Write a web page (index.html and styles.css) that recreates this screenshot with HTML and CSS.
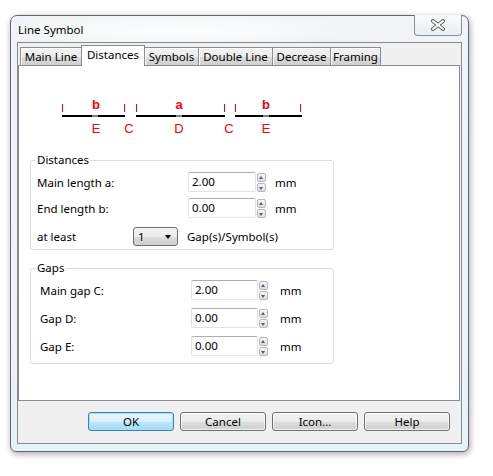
FILE: index.html
```html
<html lang="en">

<head>
  <meta charset="UTF-8">
  <meta name="viewport" content="width=device-width, initial-scale=1.0">
  <title>Line Symbol</title>
  <link rel="stylesheet" href="styles.css">
</head>

<body>
  <div class="window">
    <div class="titlebar">
      <span class="title">Line Symbol</span>
      <button type="button" class="close-btn">
        <svg width="16" height="12" viewBox="0 0 16 12">
          <path d="M3 2 L13 10 M13 2 L3 10" stroke="#5d6369" stroke-width="4" stroke-linecap="round" />
          <path d="M3 2 L13 10 M13 2 L3 10" stroke="#fff" stroke-width="2" stroke-linecap="round" />
        </svg>
      </button>
    </div>
    <div class="client">
      <div class="tabs">
        <div class="tab">Main Line</div>
        <div class="tab active">Distances</div>
        <div class="tab">Symbols</div>
        <div class="tab">Double Line</div>
        <div class="tab">Decrease</div>
        <div class="tab">Framing</div>
      </div>
      <div class="tab-page">
        <!-- legend sketch: end parts b, main part a, gaps C / D / E -->
        <svg class="diagram" width="300" height="86" viewBox="0 0 300 86">
          <g stroke="#000" stroke-width="2">
            <line x1="43" y1="50" x2="106" y2="50" />
            <line x1="117" y1="50" x2="206" y2="50" />
            <line x1="216" y1="50" x2="283" y2="50" />
          </g>
          <g stroke="#808080" stroke-width="2">
            <line x1="73" y1="50" x2="79" y2="50" />
            <line x1="157" y1="50" x2="163" y2="50" />
            <line x1="244" y1="50" x2="250" y2="50" />
          </g>
          <g stroke="#f00" stroke-width="1">
            <line x1="43.5" y1="38" x2="43.5" y2="46" />
            <line x1="105.5" y1="38" x2="105.5" y2="46" />
            <line x1="117.5" y1="38" x2="117.5" y2="46" />
            <line x1="205.5" y1="38" x2="205.5" y2="46" />
            <line x1="216.5" y1="38" x2="216.5" y2="46" />
            <line x1="281.5" y1="38" x2="281.5" y2="46" />
          </g>
          <text class="mark-small" x="77" y="43">b</text>
          <text class="mark-small" x="160" y="43">a</text>
          <text class="mark-small" x="247" y="43">b</text>
          <text class="mark-cap" x="77" y="67">E</text>
          <text class="mark-cap" x="110" y="67">C</text>
          <text class="mark-cap" x="160" y="67">D</text>
          <text class="mark-cap" x="210" y="67">C</text>
          <text class="mark-cap" x="247" y="67">E</text>
        </svg>

        <fieldset class="group group-distances">
          <legend>Distances</legend>
          <div class="field-row">
            <span class="label">Main length a:</span>
            <span class="textbox">2.00</span>
            <span class="spinner"><span class="spin up"></span><span class="spin down"></span></span>
            <span class="unit">mm</span>
          </div>
          <div class="field-row">
            <span class="label">End length b:</span>
            <span class="textbox">0.00</span>
            <span class="spinner"><span class="spin up"></span><span class="spin down"></span></span>
            <span class="unit">mm</span>
          </div>
          <div class="field-row combo-row">
            <span class="label short">at least</span>
            <span class="combo">1</span>
            <span class="unit">Gap(s)/Symbol(s)</span>
          </div>
        </fieldset>

        <fieldset class="group group-gaps">
          <legend>Gaps</legend>
          <div class="field-row">
            <span class="label">Main gap C:</span>
            <span class="textbox">2.00</span>
            <span class="spinner"><span class="spin up"></span><span class="spin down"></span></span>
            <span class="unit">mm</span>
          </div>
          <div class="field-row">
            <span class="label">Gap D:</span>
            <span class="textbox">0.00</span>
            <span class="spinner"><span class="spin up"></span><span class="spin down"></span></span>
            <span class="unit">mm</span>
          </div>
          <div class="field-row">
            <span class="label">Gap E:</span>
            <span class="textbox">0.00</span>
            <span class="spinner"><span class="spin up"></span><span class="spin down"></span></span>
            <span class="unit">mm</span>
          </div>
        </fieldset>
      </div>
      <div class="buttons">
        <button type="button" class="btn default">OK</button>
        <button type="button" class="btn">Cancel</button>
        <button type="button" class="btn">Icon...</button>
        <button type="button" class="btn">Help</button>
      </div>
    </div>
  </div>
</body>

</html>
```

FILE: styles.css
```css
* {
  box-sizing: border-box;
  margin: 0;
  padding: 0;
}

body {
  background: #fff;
  font-family: "Noto Sans", Arial, sans-serif;
  font-size: 11.5px;
  color: #000;
}

.window {
  display: flex;
  flex-direction: column;
  width: 459px;
  height: 437px;
  margin: 15px 0 0 10px;
  border: 1px solid #60666c;
  border-radius: 7px 7px 6px 6px;
  background: radial-gradient(ellipse 180px 18px at 170px 14px, rgba(255, 255, 255, .9), rgba(255, 255, 255, 0)),
    linear-gradient(#f1f4f6, #eef2f4 85%, #e6f4f5);
  box-shadow: 1px 2px 6px rgba(0, 0, 0, .35);
}

.titlebar {
  display: flex;
  justify-content: space-between;
  align-items: flex-start;
  height: 26px;
}

.title {
  padding: 6px 0 0 7px;
  line-height: 16px;
}

.close-btn {
  all: unset;
  display: flex;
  align-items: center;
  justify-content: center;
  width: 46px;
  height: 20px;
  margin: -1px 6px 0 0;
  border: 1px solid #8a9096;
  border-top: none;
  border-radius: 0 0 4px 4px;
  background: linear-gradient(#f9fbfc, #e9eef2);
}

.client {
  display: flex;
  flex-direction: column;
  height: 402px;
  margin: 0 6px;
  border: 1px solid #838a91;
  background: #f0f0f0;
}

.tabs {
  display: flex;
  align-items: flex-end;
  height: 22px;
  padding-left: 2px;
}

.tab {
  height: 18px;
  border: 1px solid #898c95;
  border-bottom: none;
  border-right-width: 0;
  background: linear-gradient(#f2f2f2, #ebebeb 50%, #dddddd 51%, #cfcfcf);
  box-shadow: inset 1px 1px 0 #fcfcfc;
  text-align: center;
  line-height: 17px;
}

.tab:nth-child(1) { width: 61px; }
.tab:nth-child(2) { width: 64px; }
.tab:nth-child(3) { width: 53px; }
.tab:nth-child(4) { width: 74px; }
.tab:nth-child(5) { width: 58px; }
.tab:nth-child(6) { width: 51px; border-right-width: 1px; }

.tab.active {
  position: relative;
  z-index: 1;
  height: 21px;
  margin-bottom: -1px;
  border-right-width: 1px;
  background: #fff;
  box-shadow: none;
  line-height: 18px;
}

.tab.active + .tab {
  border-left: none;
}

.tab-page {
  height: 336px;
  margin-right: 1px;
  border: 1px solid #898c95;
  background: #fff;
}

.diagram {
  display: block;
}

.mark-small {
  fill: #f00;
  font-family: "Liberation Sans", Arial, sans-serif;
  font-size: 13px;
  font-weight: bold;
  text-anchor: middle;
}

.mark-cap {
  fill: #f00;
  font-family: "Liberation Sans", Arial, sans-serif;
  font-size: 13px;
  text-anchor: middle;
}

.group {
  width: 304px;
  margin-left: 11px;
  border: 1px solid #d5dfe5;
  border-radius: 3px;
}

.group legend {
  margin-left: 5px;
  padding: 0 1px;
  line-height: 16px;
}

.group-distances {
  padding-bottom: 3px;
}

.group-gaps {
  margin-top: 10px;
  padding-bottom: 3px;
}

.field-row {
  display: flex;
  align-items: center;
  height: 26px;
  padding-left: 6px;
}

.group-distances .field-row:first-of-type {
  margin-top: 1px;
}

.group-distances .combo-row {
  height: 20px;
  margin-top: 5px;
}

.group-gaps .field-row {
  height: 28px;
  padding-left: 9px;
}

.label {
  width: 151px;
}

.label.short {
  width: 96px;
}

.textbox {
  width: 68px;
  height: 20px;
  padding-left: 3px;
  border: 1px solid #e2e3ea;
  border-top-color: #abadb3;
  border-radius: 2px;
  background: #fff;
  line-height: 17px;
}

.group-gaps .textbox {
  width: 67px;
}

.spinner {
  display: flex;
  flex-direction: column;
  gap: 1px;
  margin-left: 1px;
}

.spin {
  position: relative;
  width: 9px;
  height: 9px;
  border: 1px solid #b7b9bd;
  border-radius: 2px;
  background: linear-gradient(#f6f6f6, #dedede);
}

.spin::after {
  content: "";
  position: absolute;
  left: 1px;
  border-left: 2.5px solid transparent;
  border-right: 2.5px solid transparent;
}

.spin.up::after {
  top: 2px;
  border-bottom: 3px solid #4c5f82;
}

.spin.down::after {
  top: 3px;
  border-top: 3px solid #4c5f82;
}

.unit {
  margin-left: 9px;
}

.group-gaps .unit {
  margin-left: 12px;
}

.combo {
  position: relative;
  width: 45px;
  height: 19px;
  padding-left: 4px;
  border: 1px solid #707070;
  border-radius: 3px;
  background: linear-gradient(#f2f2f2, #ebebeb 50%, #dddddd 51%, #cfcfcf);
  line-height: 17px;
}

.combo::after {
  content: "";
  position: absolute;
  top: 7px;
  right: 6px;
  border-left: 3.5px solid transparent;
  border-right: 3.5px solid transparent;
  border-top: 4px solid #000;
}

.buttons {
  display: flex;
  justify-content: flex-end;
  gap: 6px;
  margin-top: 11px;
  padding-right: 11px;
}

.btn {
  all: unset;
  width: 86px;
  height: 19px;
  border: 1px solid #707070;
  border-radius: 3px;
  background: linear-gradient(#f2f2f2, #ebebeb 50%, #dddddd 51%, #cfcfcf);
  box-shadow: inset 0 0 0 1px rgba(255, 255, 255, .7);
  font-family: "Noto Sans", Arial, sans-serif;
  font-size: 11.5px;
  text-align: center;
  line-height: 17px;
  box-sizing: border-box;
}

.btn.default {
  border-color: #3c7fb1;
  background: linear-gradient(#eaf6fd, #d9f0fc 50%, #bee6fd 51%, #a7d9f5);
  box-shadow: inset 0 0 0 1px #a6e2fb;
}
```
